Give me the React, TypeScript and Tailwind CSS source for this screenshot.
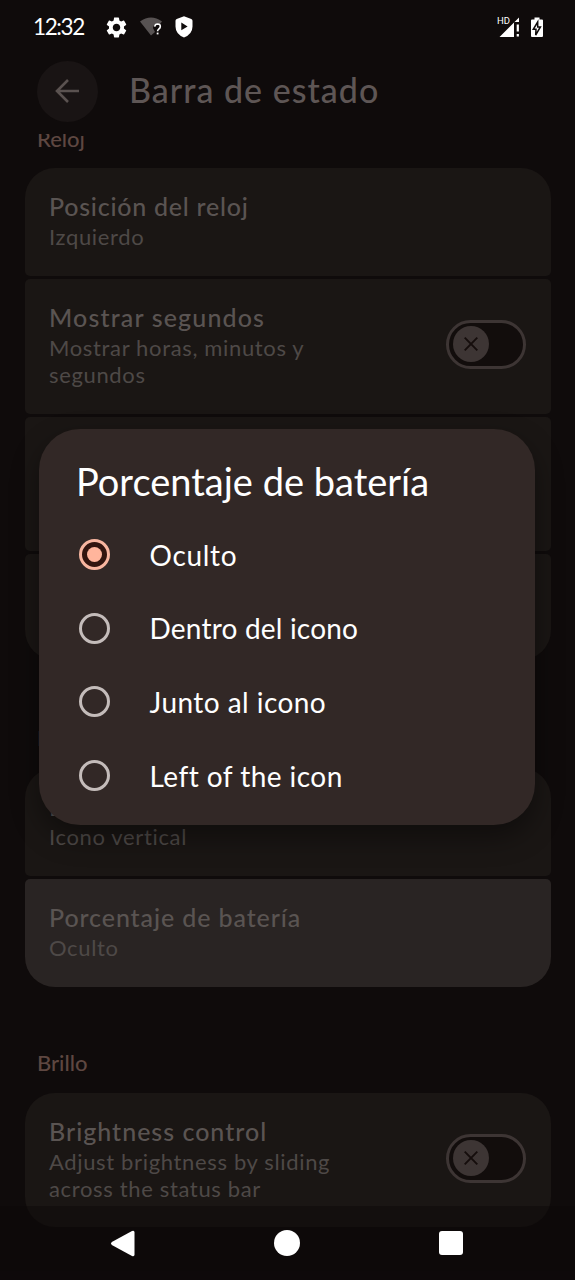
import type { ReactNode } from "react"
import clsx from "clsx"
import { MdSettings } from "react-icons/md"

const BatteryOptions = [
  { label: "Oculto", tracking: "tracking-[0.7px]" },
  { label: "Dentro del icono", tracking: "tracking-[0.2px]" },
  { label: "Junto al icono", tracking: "tracking-[0.450px]" },
  { label: "Left of the icon", tracking: "tracking-[0.450px]" },
]

const StatusBar = () => (
  <div className="flex h-[54px] shrink-0 items-center pr-[31px] pl-[33px] text-white">
    <span className="w-[71px] text-[22.500px] leading-none tracking-[-1.400px] whitespace-nowrap">
      12:32
    </span>
    <MdSettings size={25} className="shrink-0" />
    <svg width="24" height="20" viewBox="0 0 24 20" className="ml-[11px] shrink-0">
      <path d="M0 4.500Q11-3.500 22 4.500L20 7Q14 6 13 11L15 15L11 18.500Z" fill="#575252" />
      <path
        d="M14.700 9.700Q15 7 17.600 7Q20.400 7.100 20.300 9.600Q20.200 11 18.800 12Q17.600 13 17.600 14.200"
        fill="none"
        stroke="#fff"
        strokeWidth="1.600"
      />
      <rect x="16.700" y="15.600" width="1.800" height="1.800" fill="#fff" />
    </svg>
    <svg width="18" height="22" viewBox="0 0 18 22" className="ml-[11px] shrink-0">
      <path
        fillRule="evenodd"
        fill="#fff"
        d="M9 .3L16.300 3Q17.500 3.500 17.500 4.700V10.500Q17.500 18 9 21.500Q.5 18 .5 10.500V4.700Q.5 3.500 1.700 3ZM6.300 6.500V14.300L12.600 10.400Z"
      />
    </svg>
    <div className="ml-auto flex items-center">
      <div className="relative h-[21px] w-[23px]">
        <span className="absolute -top-[2px] -left-[1px] font-[Roboto] text-[9.500px] leading-[12px]">
          HD
        </span>
        <svg width="23" height="21" viewBox="0 0 23 21">
          <path d="M1.500 20L21 .5V5H16V20Z" fill="#fff" />
          <path d="M19.800 7.500V14.500M19.800 17V19.500" stroke="#fff" strokeWidth="2.200" />
        </svg>
      </div>
      <svg width="14" height="21" viewBox="0 0 14 21" className="ml-[9px]">
        <path d="M4.500 .5H9.500V2.500H12Q13 2.500 13 3.500V19Q13 20 12 20H2Q1 20 1 19V3.500Q1 2.500 2 2.500H4.500Z" fill="#fff" />
        <path d="M7.700 5L3.300 12.300H6L5.700 18L10.400 10H7.700Z" fill="#fff" stroke="#0f0b0b" strokeWidth="1.500" />
      </svg>
    </div>
  </div>
)

const Header = () => (
  <div className="flex h-[80px] shrink-0 items-start gap-[31px] pt-[6.500px] pl-[37px]">
    <div className="flex size-[61px] items-center justify-center rounded-full bg-[#191414] pr-[2px]">
      <svg width="26" height="26" viewBox="0 0 26 26" fill="none" stroke="#5a5250" strokeWidth="2.600">
        <path d="M25 13H3M14 2L3 13L14 24" />
      </svg>
    </div>
    <h1 className="pt-[7.500px] text-[34px] leading-[44px] font-medium tracking-[1px] whitespace-nowrap text-[#5e5655]">
      Barra de estado
    </h1>
  </div>
)

const Toggle = () => (
  <div className="flex h-[49px] w-[80px] shrink-0 items-center rounded-full border-[3px] border-[#3d3534] bg-[#120d0c] pl-[3.500px]">
    <div className="flex size-[36px] items-center justify-center rounded-full bg-[#3d3534]">
      <svg width="14" height="14" viewBox="0 0 14 14" stroke="#150d0c" strokeWidth="1.900">
        <path d="M.7 .7L13.300 13.300M13.300 .7L.7 13.300" />
      </svg>
    </div>
  </div>
)

interface CardProps {
  title?: ReactNode
  summary?: ReactNode
  toggle?: boolean
  className: string
  titleClassName?: string
}

const Card = ({ title, summary, toggle, className, titleClassName }: CardProps) => (
  <div
    className={clsx(
      "flex shrink-0 items-start justify-between overflow-hidden pt-[23px] pr-[24.500px] pl-[24.500px] text-[#5a5452]",
      className,
    )}
  >
    <div className="whitespace-nowrap">
      <p className={clsx("text-[25px] leading-[31px] font-medium", titleClassName)}>{title}</p>
      <p className="pt-px text-[22px] leading-[27px] tracking-[0.650px] text-[#4e4947]">{summary}</p>
    </div>
    {toggle && (
      <div className="mt-[17.500px]">
        <Toggle />
      </div>
    )}
  </div>
)

const SectionLabel = ({ children }: { children: ReactNode }) => (
  <h2 className="pl-[12.500px] text-[22px] leading-[28px] font-medium text-[#5e4741]">{children}</h2>
)

const Settings = () => (
  <div className="min-h-0 flex-1 overflow-hidden px-[24.500px]">
    <div className="-mt-[9px] flex flex-col">
      <SectionLabel>Reloj</SectionLabel>
      <div className="mt-[15px] flex flex-col gap-[3px]">
        <Card
          title="Posición del reloj"
          summary="Izquierdo"
          titleClassName="tracking-[0.750px]"
          className="h-[108px] rounded-t-[30px] rounded-b-[5px] bg-[#1a1614]"
        />
        <Card
          title="Mostrar segundos"
          summary={
            <>
              Mostrar horas, minutos y
              <br />
              segundos
            </>
          }
          toggle
          titleClassName="tracking-[1.150px]"
          className="h-[135px] rounded-[5px] bg-[#1a1614]"
        />
        <Card className="h-[134px] rounded-[5px] bg-[#1a1614]" />
        <Card className="h-[106px] rounded-t-[5px] rounded-b-[30px] bg-[#1a1614]" />
      </div>
      <div className="mt-[64px]">
        <SectionLabel>Batería</SectionLabel>
      </div>
      <div className="mt-[16px] flex flex-col gap-[3px]">
        <Card
          title="Estilo de batería"
          summary="Icono vertical"
          titleClassName="tracking-[0.900px]"
          className="h-[108px] rounded-t-[30px] rounded-b-[5px] bg-[#1a1614]"
        />
        <Card
          title="Porcentaje de batería"
          summary="Oculto"
          titleClassName="tracking-[0.900px]"
          className="h-[108px] rounded-t-[5px] rounded-b-[30px] bg-[#292423]"
        />
      </div>
      <div className="mt-[62px]">
        <SectionLabel>Brillo</SectionLabel>
      </div>
      <Card
        title="Brightness control"
        summary={
          <>
            Adjust brightness by sliding
            <br />
            across the status bar
          </>
        }
        toggle
        titleClassName="tracking-[1px]"
        className="mt-[16px] h-[134px] rounded-[30px] bg-[#1a1614]"
      />
    </div>
  </div>
)

const BatteryDialog = () => (
  <div
    role="dialog"
    className="absolute top-[429px] left-[39px] h-[396px] w-[496px] rounded-[41px] bg-[#322826] pt-[29px] pl-[37px] text-white shadow-[0_12px_28px_rgba(0,0,0,0.4)]"
  >
    <h2 className="text-[38px] leading-[46px] whitespace-nowrap">Porcentaje de batería</h2>
    <ul className="mt-[14px]">
      {BatteryOptions.map((option, index) => (
        <li key={option.label} className="flex h-[73.600px] items-center gap-[39.500px] pl-[3px]">
          <span
            className={clsx(
              "flex size-[31px] items-center justify-center rounded-full border-[3px]",
              index === 0 ? "border-[#f8b6a0] bg-[#32150f]" : "border-[#c4bcba]",
            )}
          >
            {index === 0 && <span className="size-[15px] rounded-full bg-[#ffb59c]" />}
          </span>
          <span className={clsx("text-[28px] leading-[36px] whitespace-nowrap", option.tracking)}>
            {option.label}
          </span>
        </li>
      ))}
    </ul>
  </div>
)

const NavigationBar = () => (
  <div className="absolute inset-x-0 bottom-0 flex h-[74px] items-center justify-between bg-[#0c0808]/50 pr-[112px] pl-[110px]">
    <svg width="25" height="27" viewBox="0 0 25 27" fill="#fff">
      <path d="M22 1Q24.500 0 24.500 2.500V24.500Q24.500 27 22 26L1.800 15Q0 13.500 1.800 12Z" />
    </svg>
    <div className="size-[26px] rounded-full bg-white" />
    <div className="size-[24px] rounded-[3px] bg-white" />
  </div>
)

const App = () => (
  <div className="relative flex h-[1280px] w-[575px] flex-col overflow-hidden bg-[#0f0b0b] font-[Lato,sans-serif]">
    <StatusBar />
    <Header />
    <Settings />
    <BatteryDialog />
    <NavigationBar />
  </div>
)

export default App
